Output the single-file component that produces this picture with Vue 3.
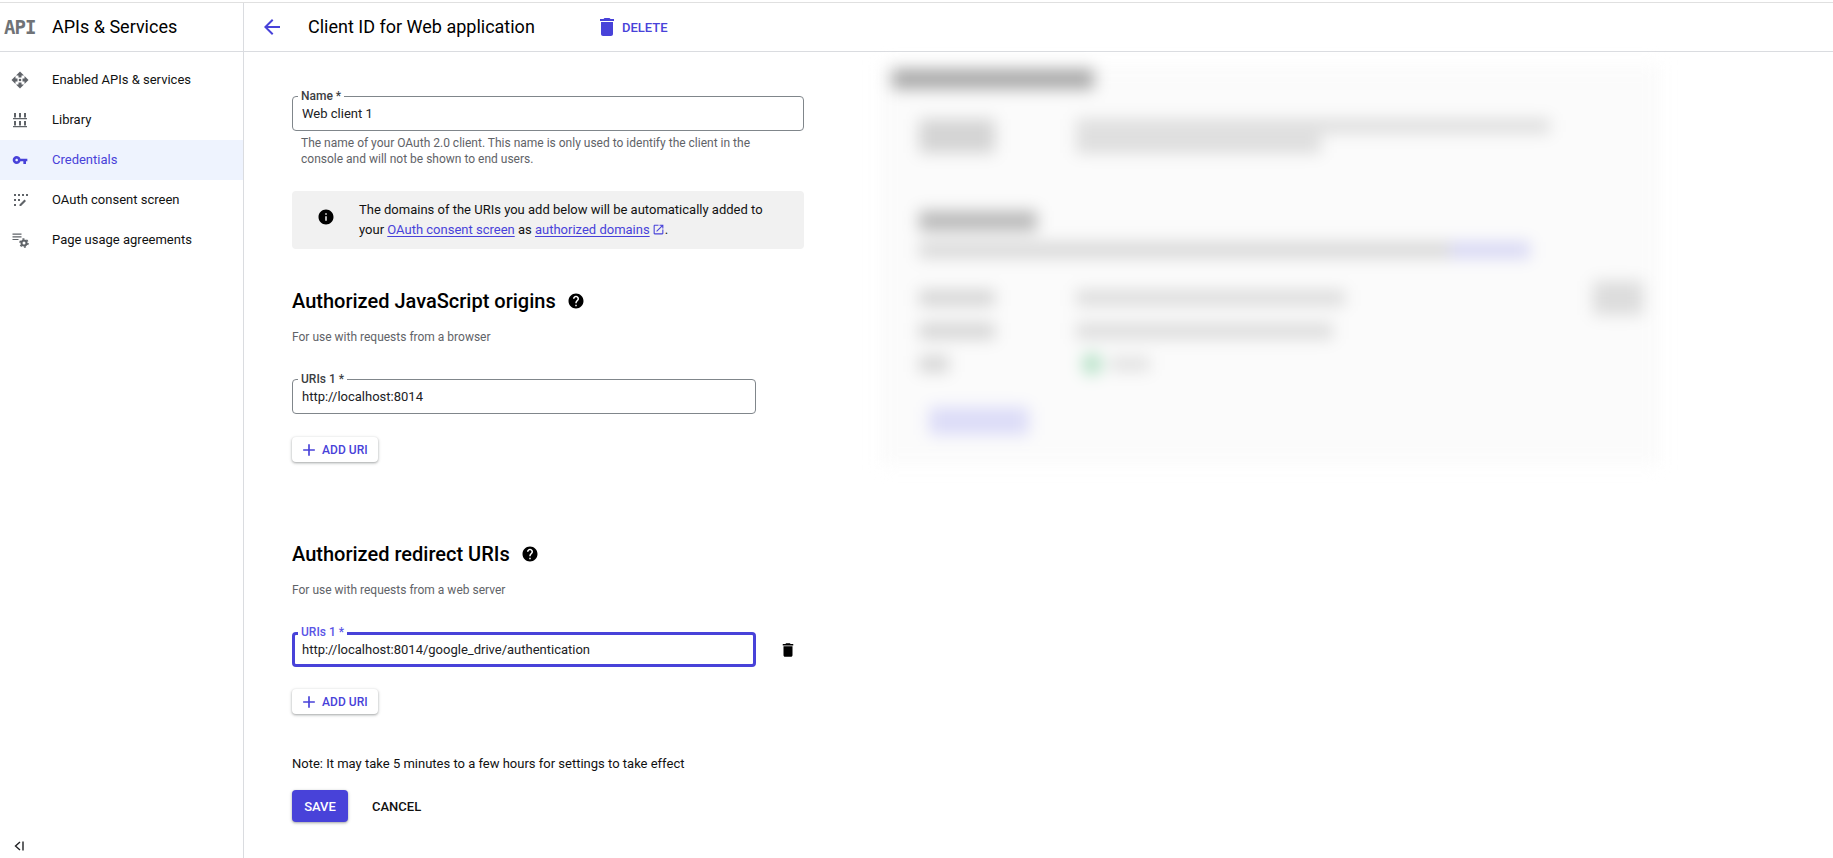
<script setup>
const nav = [
  { label: 'Enabled APIs & services', icon: 'enabled' },
  { label: 'Library', icon: 'library' },
  { label: 'Credentials', icon: 'key', active: true },
  { label: 'OAuth consent screen', icon: 'oauth' },
  { label: 'Page usage agreements', icon: 'page' }
]
const trash = 'M6 19c0 1.1.9 2 2 2h8c1.1 0 2-.9 2-2V7H6v12zM19 4h-3.5l-1-1h-5l-1 1H5v2h14V4z'
const help = 'M12 2C6.48 2 2 6.48 2 12s4.48 10 10 10 10-4.48 10-10S17.52 2 12 2zm1 17h-2v-2h2v2zm2.07-7.75l-.9.92C13.45 12.9 13 13.5 13 15h-2v-.5c0-1.1.45-2.1 1.17-2.83l1.24-1.26c.37-.36.59-.86.59-1.41 0-1.1-.9-2-2-2s-2 .9-2 2H8c0-2.21 1.79-4 4-4s4 1.79 4 4c0 .88-.36 1.68-.93 2.25z'
const plus = 'M19 13h-6v6h-2v-6H5v-2h6V5h2v6h6v2z'
</script>

<template>
  <div class="page">
    <aside class="side">
      <div class="side-head">
        <span class="api">API</span>
        <span class="side-title">APIs &amp; Services</span>
      </div>
      <nav class="nav">
        <a v-for="n in nav" :key="n.label" class="nav-row" :class="{ active: n.active }">
          <span class="nav-ico">
            <svg v-if="n.icon === 'enabled'" viewBox="0 0 24 24" width="24" height="24" fill="currentColor">
              <path d="M12 3.500L16 7.500h-2.500V9.500h-3V7.500H8zM12 20.500L8 16.500h2.500v-2h3v2H16zM3.500 12L7.500 8v2.500h2v3h-2V16zM20.500 12L16.500 16v-2.500h-2v-3h2V8z" />
              <circle cx="12" cy="12" r="1.300" />
            </svg>
            <svg v-else-if="n.icon === 'library'" viewBox="0 0 24 24" width="24" height="24" fill="currentColor">
              <path d="M6 5h2v4.500H6zM11 5h2v4.500h-2zM16 5h2v4.500h-2zM5 10h14v1.200H5zM6 13h2v4.500H6zM11 13h2v4.500h-2zM16 13h2v4.500h-2zM5 18h14v1.200H5z" />
            </svg>
            <svg v-else-if="n.icon === 'key'" viewBox="0 0 24 24" width="16" height="16" fill="currentColor">
              <path d="M12.650 10C11.830 7.670 9.610 6 7 6c-3.310 0-6 2.690-6 6s2.690 6 6 6c2.610 0 4.830-1.670 5.650-4H17v4h4v-4h2v-4H12.650zM7 14c-1.100 0-2-.9-2-2s.9-2 2-2 2 .9 2 2-.9 2-2 2z" />
            </svg>
            <svg v-else-if="n.icon === 'oauth'" viewBox="0 0 24 24" width="24" height="24" fill="currentColor">
              <path d="M6 6h2v2H6zM10 6h2v2h-2zM14 6h2v2h-2zM18 6h2v2h-2zM6 11h2v2H6zM10 11h2v2h-2zM6 16h2v2H6zM16.500 11.500l1.500 1.500-5 5h-1.500v-1.500z" />
            </svg>
            <svg v-else viewBox="0 0 24 24" width="24" height="24" fill="currentColor">
              <path d="M4.500 5.500h9v1.200h-9zM4.500 8.200h9v1.200h-9zM4.500 10.900h6v1.200h-6z" />
              <circle cx="16" cy="15" r="2.500" fill="none" stroke="currentColor" stroke-width="2" />
              <circle cx="16" cy="15" r="4" fill="none" stroke="currentColor" stroke-width="1.500" stroke-dasharray="2 2.190" />
            </svg>
          </span>
          <span class="nav-label">{{ n.label }}</span>
        </a>
      </nav>
      <div class="collapse">
        <svg viewBox="0 0 12 12" width="12" height="12" fill="none" stroke="#202124" stroke-width="1.400">
          <path d="M7 2L2.500 6 7 10" />
          <path d="M10 1.500v9" />
        </svg>
      </div>
    </aside>

    <div class="content">
      <header class="top">
        <svg class="back" viewBox="0 0 24 24" width="24" height="24" fill="#4842d9">
          <path d="M20 11H7.830l5.590-5.590L12 4l-8 8 8 8 1.410-1.410L7.830 13H20v-2z" />
        </svg>
        <h1 class="top-title">Client ID for Web application</h1>
        <button class="delete">
          <svg viewBox="0 0 24 24" width="24" height="24" fill="#4842d9"><path :d="trash" /></svg>
          <span>DELETE</span>
        </button>
      </header>

      <div class="body">
        <main class="form">
          <div class="field name">
            <label>Name *</label>
            <input value="Web client 1" />
          </div>
          <p class="hint">The name of your OAuth 2.0 client. This name is only used to identify the client in the console and will not be shown to end users.</p>

          <div class="info">
            <svg class="info-ico" viewBox="0 0 24 24" width="18" height="18" fill="#000">
              <path d="M12 2C6.480 2 2 6.480 2 12s4.480 10 10 10 10-4.480 10-10S17.520 2 12 2zm1 15h-2v-6h2v6zm0-8h-2V7h2v2z" />
            </svg>
            <div class="info-text">
              <div>The domains of the URIs you add below will be automatically added to</div>
              <div>
                <span>your </span><a>OAuth consent screen</a><span> as </span><a>authorized domains</a><svg class="ext" viewBox="0 0 24 24" width="13" height="13" fill="#4842d9"><path d="M19 19H5V5h7V3H5c-1.110 0-2 .9-2 2v14c0 1.100.89 2 2 2h14c1.100 0 2-.9 2-2v-7h-2v7zM14 3v2h3.590l-9.830 9.830 1.410 1.410L19 6.410V10h2V3h-7z" /></svg><span>.</span>
              </div>
            </div>
          </div>

          <h2 class="sec first">
            Authorized JavaScript origins
            <svg viewBox="0 0 24 24" width="18" height="18" fill="#000"><path :d="help" /></svg>
          </h2>
          <p class="sub">For use with requests from a browser</p>
          <div class="field uri u1">
            <label>URIs 1 *</label>
            <input value="http://localhost:8014" />
          </div>
          <button class="add a1">
            <svg viewBox="0 0 24 24" width="20" height="20" fill="#4842d9"><path :d="plus" /></svg>
            ADD URI
          </button>

          <h2 class="sec second">
            Authorized redirect URIs
            <svg viewBox="0 0 24 24" width="18" height="18" fill="#000"><path :d="help" /></svg>
          </h2>
          <p class="sub">For use with requests from a web server</p>
          <div class="uri-row">
            <div class="field uri focus">
              <label>URIs 1 *</label>
              <input value="http://localhost:8014/google_drive/authentication" />
            </div>
            <svg class="row-trash" viewBox="0 0 24 24" width="18" height="18" fill="#000"><path :d="trash" /></svg>
          </div>
          <button class="add a2">
            <svg viewBox="0 0 24 24" width="20" height="20" fill="#4842d9"><path :d="plus" /></svg>
            ADD URI
          </button>

          <p class="note">Note: It may take 5 minutes to a few hours for settings to take effect</p>
          <div class="actions">
            <button class="save">SAVE</button>
            <button class="cancel">CANCEL</button>
          </div>
        </main>

        <section class="blurred" aria-hidden="true">
          <div class="b-head"></div>
          <div class="b-row r1">
            <div class="b-label tall"></div>
            <div class="b-vals">
              <div class="b-line v1"></div>
              <div class="b-line v2"></div>
            </div>
          </div>
          <div class="b-sub"></div>
          <div class="b-long"><span></span></div>
          <div class="b-row r2">
            <div class="b-label"></div>
            <div class="b-line v3"></div>
            <div class="b-copy"></div>
          </div>
          <div class="b-row r3">
            <div class="b-label"></div>
            <div class="b-line v4"></div>
          </div>
          <div class="b-row r4">
            <div class="b-label short"></div>
            <div class="b-dot"></div>
            <div class="b-line v5"></div>
          </div>
          <div class="b-btn"></div>
        </section>
      </div>
    </div>
  </div>
</template>

<style>
html, body { margin: 0; background: #fff; overflow: hidden; }
</style>

<style scoped>
* { box-sizing: border-box; }
.page {
  width: 1833px;
  height: 856px;
  margin-top: 2px;
  display: flex;
  border-top: 1px solid #e0e0e0;
  font-family: Roboto, "Liberation Sans", sans-serif;
  color: #202124;
  overflow: hidden;
}
.side {
  width: 244px;
  flex: none;
  border-right: 1px solid #dadce0;
  display: flex;
  flex-direction: column;
}
.side-head {
  height: 49px;
  flex: none;
  border-bottom: 1px solid #dadce0;
  display: flex;
  align-items: center;
  padding-left: 4px;
}
.api {
  width: 48px;
  font-family: "DejaVu Sans Mono", monospace;
  font-weight: 700;
  font-size: 19px;
  letter-spacing: -0.9px;
  color: #707377;
}
.side-title { font-size: 18px; color: #000; margin-top: -2px; }
.nav { padding-top: 8px; flex: 1; }
.nav-row {
  height: 40px;
  display: flex;
  align-items: center;
  font-size: 13px;
  color: #111;
}
.nav-row.active { background: #eef3fe; color: #4842d9; }
.nav-label { margin-top: -2px; }
.nav-ico {
  width: 40px;
  margin-right: 12px;
  display: flex;
  align-items: center;
  justify-content: center;
  color: #5f6368;
}
.active .nav-ico { color: #4842d9; }
.collapse {
  height: 18px;
  flex: none;
  padding-left: 13px;
  display: flex;
  align-items: flex-start;
}
.content { flex: 1; min-width: 0; }
.top {
  height: 49px;
  border-bottom: 1px solid #dadce0;
  display: flex;
  align-items: center;
  padding-left: 16px;
}
.back { flex: none; }
.top-title {
  margin: -2px 0 0 24px;
  font-size: 18px;
  font-weight: 400;
  color: #000;
  width: 287px;
}
.delete {
  display: flex;
  align-items: center;
  gap: 3px;
  border: 0;
  background: none;
  padding: 0;
  font: 500 13px Roboto, sans-serif;
  color: #4842d9;
}
.body { display: flex; align-items: flex-start; }
.form { width: 512px; margin-left: 48px; padding-top: 44px; flex: none; }
.field { position: relative; height: 35px; }
.field label {
  position: absolute;
  left: 6px;
  top: -7px;
  padding: 0 3px;
  background: #fff;
  font-size: 12px;
  font-weight: 500;
  line-height: 14px;
  color: #3c4043;
}
.field input {
  width: 100%;
  height: 100%;
  border: 1px solid #80868b;
  border-radius: 4px;
  padding: 0 9px;
  font: 13px Roboto, sans-serif;
  color: #202124;
  outline: none;
  background: #fff;
}
.hint {
  margin: 4px 0 0;
  padding: 0 40px 0 9px;
  font-size: 12px;
  line-height: 16px;
  color: #5f6368;
}
.info {
  margin-top: 24px;
  height: 58px;
  background: #f1f1f1;
  border-radius: 4px;
  display: flex;
  align-items: center;
  padding-left: 25px;
}
.info-ico { flex: none; margin-right: 24px; margin-top: -6px; }
.info-text { font-size: 13px; line-height: 20px; color: #111; }
.info-text div { white-space: nowrap; }
.info-text span { white-space: pre; }
.info a { color: #4842d9; text-decoration: underline; text-underline-offset: 2px; }
.ext { vertical-align: -2px; margin-left: 2px; }
.sec {
  margin: 0;
  height: 24px;
  font-size: 20px;
  font-weight: 500;
  line-height: 24px;
  color: #000;
  display: flex;
  align-items: center;
  gap: 11px;
}
.sec.first { margin-top: 40px; }
.sec.second { margin-top: 80px; }
.sub { margin: 16px 0 0; font-size: 12px; line-height: 16px; color: #5f6368; }
.uri { width: 464px; }
.u1 { margin-top: 34px; }
.uri-row { margin-top: 34px; display: flex; align-items: center; }
.focus input { border: 3px solid #4842d9; padding: 0 7px; }
.focus label { color: #5b55e6; }
.row-trash { margin-left: 23px; flex: none; }
.add {
  display: flex;
  align-items: center;
  gap: 3px;
  width: 86px;
  height: 25px;
  border: 0;
  border-radius: 4px;
  background: #fff;
  padding: 0 0 0 7px;
  font: 500 12px Roboto, sans-serif;
  letter-spacing: .05px;
  color: #4842d9;
  box-shadow: 0 1px 2px rgba(60, 64, 67, .3), 0 1px 3px 1px rgba(60, 64, 67, .15);
}
.a1 { margin-top: 23px; }
.a2 { margin-top: 22px; }
.note { margin: 40px 0 0; font-size: 13px; line-height: 20px; color: #111; }
.actions { margin-top: 16px; display: flex; align-items: center; gap: 24px; }
.save {
  width: 56px;
  height: 32px;
  border: 0;
  border-radius: 4px;
  background: #4842d9;
  color: #fff;
  font: 500 13px Roboto, sans-serif;
  box-shadow: 0 1px 2px rgba(60, 64, 67, .3), 0 1px 3px 1px rgba(60, 64, 67, .15);
}
.cancel {
  border: 0;
  background: none;
  padding: 0;
  color: #111;
  font: 500 13px Roboto, sans-serif;
}
.blurred {
  width: 780px;
  height: 400px;
  margin: 13px 0 0 76px;
  flex: none;
  background: #fbfbfb;
  filter: blur(8px);
  padding: 4px 0 0 17px;
}
.b-head { width: 202px; height: 20px; margin-left: -5px; background: #a8a8a8; }
.b-row { display: flex; margin-left: 22px; }
.b-label { width: 76px; height: 16px; background: #d4d4d4; margin-right: 81px; flex: none; }
.b-label.tall { height: 34px; }
.b-label.short { width: 30px; margin-right: 136px; }
.b-line { height: 16px; background: #dcdcdc; }
.b-vals { display: flex; flex-direction: column; gap: 2px; }
.v1 { width: 474px; height: 14px; }
.v2 { width: 245px; height: 18px; }
.v3 { width: 269px; }
.v4 { width: 257px; }
.b-line.v5 { width: 40px; height: 14px; margin-left: 8px; background: #e0e0e0; }
.r1 { margin-top: 30px; }
.b-sub { width: 118px; height: 20px; background: #b8b8b8; margin: 58px 0 0 22px; }
.b-long { width: 611px; height: 16px; background: #d8d8d8; margin: 11px 0 0 22px; display: flex; justify-content: flex-end; }
.b-long span { width: 80px; background: #d6d6f4; }
.r2 { margin-top: 32px; position: relative; }
.b-copy { position: absolute; left: 674px; top: -9px; width: 50px; height: 34px; background: #dcdcdc; }
.r3 { margin-top: 17px; }
.r4 { margin-top: 14px; align-items: center; }
.b-dot { width: 20px; height: 22px; border-radius: 50%; background: #b2e0c4; margin-left: -3px; }
.b-btn { width: 100px; height: 28px; background: #dcdcf8; margin: 32px 0 0 32px; }
</style>
